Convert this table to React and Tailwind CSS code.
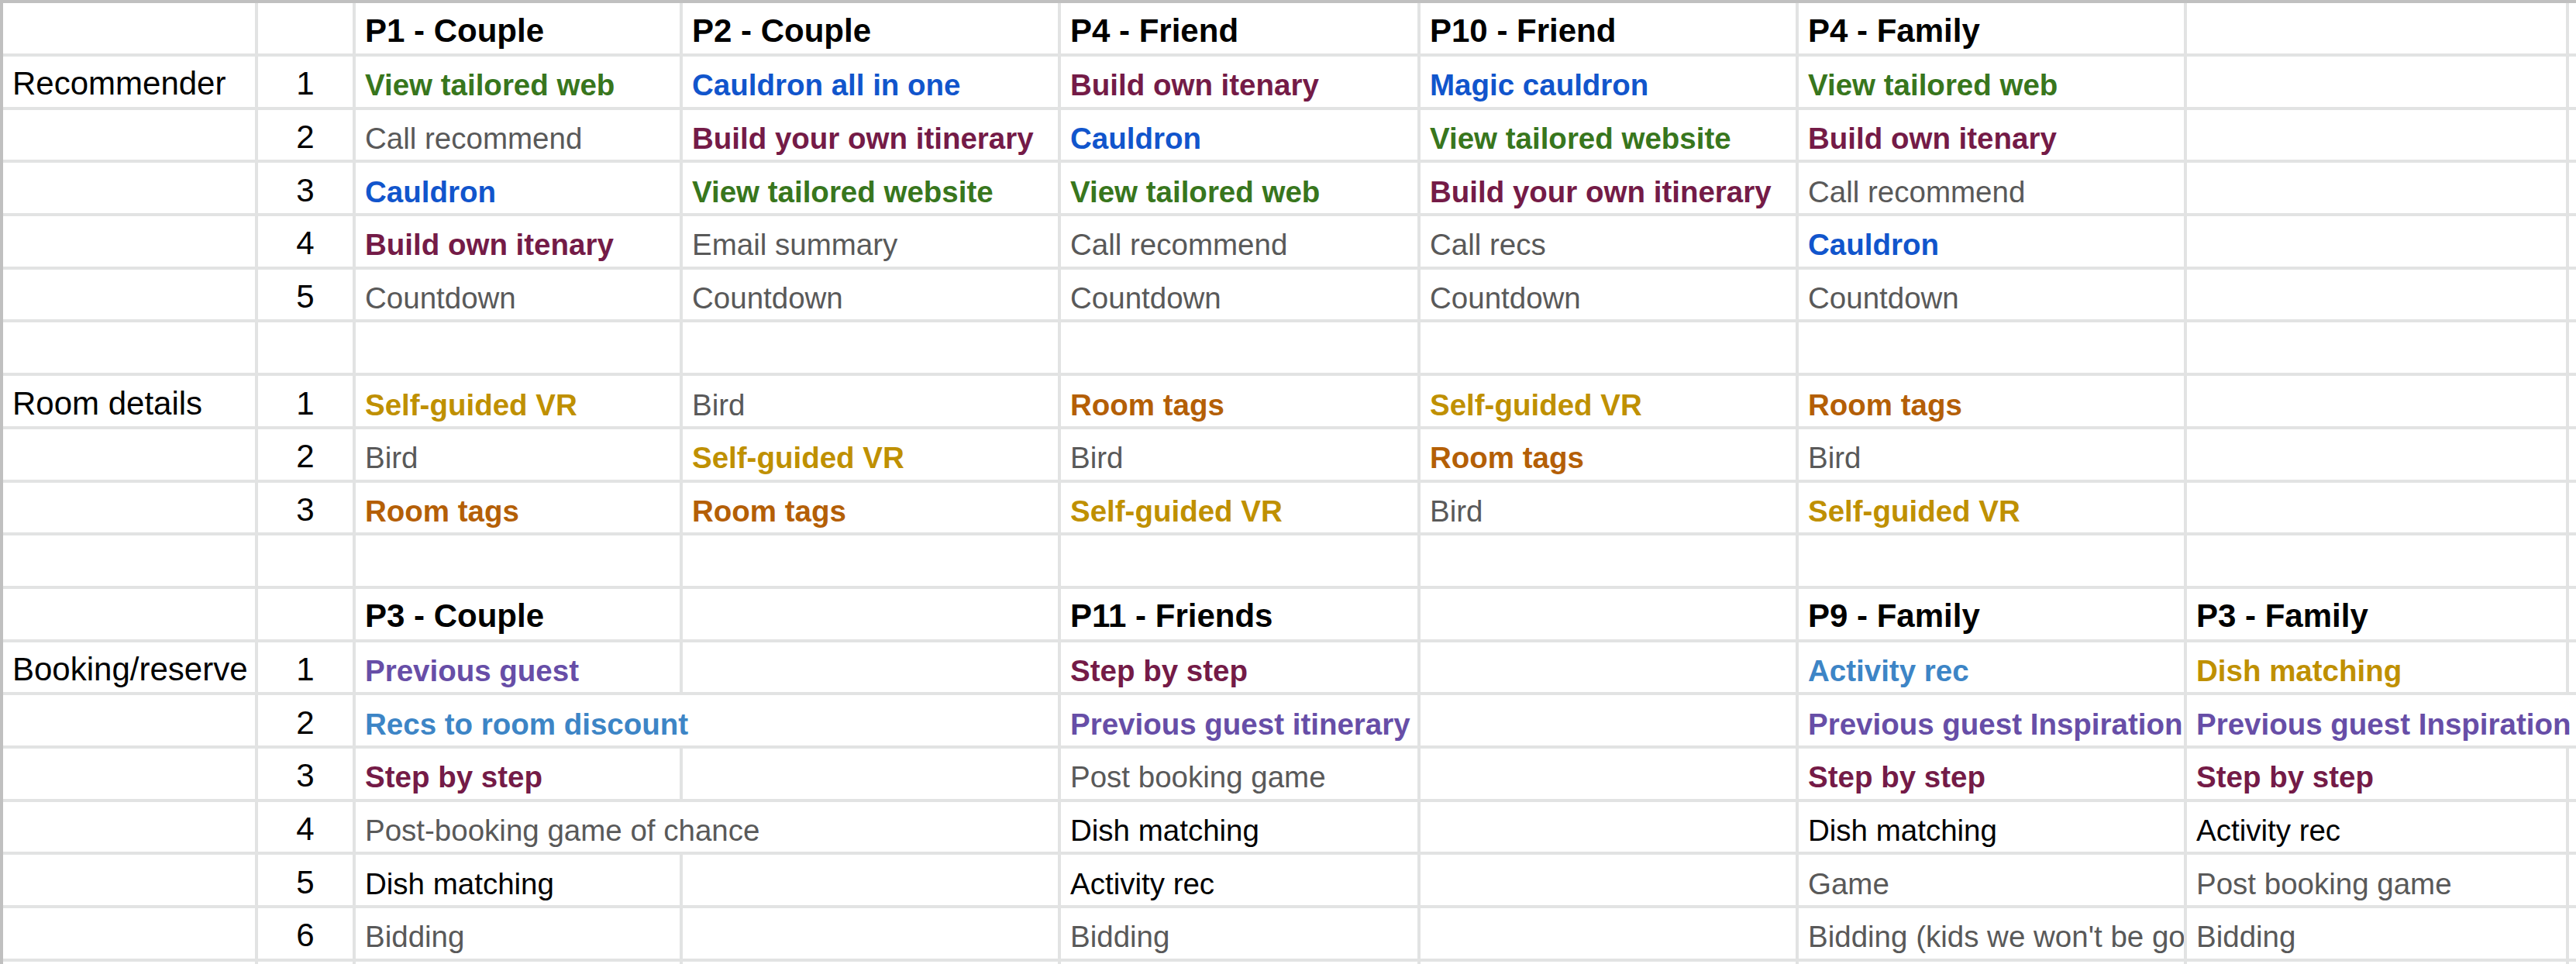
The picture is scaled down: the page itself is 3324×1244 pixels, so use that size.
import React from 'react';

// styles per text kind
const KIND = {
  g: 'text-[#38761d] font-bold text-[38.5px]',
  b: 'text-[#1155cc] font-bold text-[38.5px]',
  m: 'text-[#741b47] font-bold text-[38.5px]',
  y: 'text-[#bf9000] font-bold text-[38.5px]',
  o: 'text-[#b45f06] font-bold text-[38.5px]',
  p: 'text-[#674ea7] font-bold text-[38.5px]',
  l: 'text-[#3d85c6] font-bold text-[38.5px]',
  s: 'text-[#595959] text-[38.5px]',
  k: 'text-black text-[38.5px]',
  h: 'text-black font-bold text-[42px]',
  a: 'text-black text-[42px]',
};

const c = (t, k, span) => ({ t, k, span });

const rows = [
  [null, null, c('P1 - Couple', 'h'), c('P2 - Couple', 'h'), c('P4 - Friend', 'h'), c('P10 - Friend', 'h'), c('P4 - Family', 'h'), null, null],
  [c('Recommender', 'a'), '1', c('View tailored web', 'g'), c('Cauldron all in one', 'b'), c('Build own itenary', 'm'), c('Magic cauldron', 'b'), c('View tailored web', 'g'), null, null],
  [null, '2', c('Call recommend', 's'), c('Build your own itinerary', 'm'), c('Cauldron', 'b'), c('View tailored website', 'g'), c('Build own itenary', 'm'), null, null],
  [null, '3', c('Cauldron', 'b'), c('View tailored website', 'g'), c('View tailored web', 'g'), c('Build your own itinerary', 'm'), c('Call recommend', 's'), null, null],
  [null, '4', c('Build own itenary', 'm'), c('Email summary', 's'), c('Call recommend', 's'), c('Call recs', 's'), c('Cauldron', 'b'), null, null],
  [null, '5', c('Countdown', 's'), c('Countdown', 's'), c('Countdown', 's'), c('Countdown', 's'), c('Countdown', 's'), null, null],
  [null, null, null, null, null, null, null, null, null],
  [c('Room details', 'a'), '1', c('Self-guided VR', 'y'), c('Bird', 's'), c('Room tags', 'o'), c('Self-guided VR', 'y'), c('Room tags', 'o'), null, null],
  [null, '2', c('Bird', 's'), c('Self-guided VR', 'y'), c('Bird', 's'), c('Room tags', 'o'), c('Bird', 's'), null, null],
  [null, '3', c('Room tags', 'o'), c('Room tags', 'o'), c('Self-guided VR', 'y'), c('Bird', 's'), c('Self-guided VR', 'y'), null, null],
  [null, null, null, null, null, null, null, null, null],
  [null, null, c('P3 - Couple', 'h'), null, c('P11 - Friends', 'h'), null, c('P9 - Family', 'h'), c('P3 - Family', 'h'), null],
  [c('Booking/reserve', 'a'), '1', c('Previous guest', 'p'), null, c('Step by step', 'm'), null, c('Activity rec', 'l'), c('Dish matching', 'y'), null],
  [null, '2', c('Recs to room discount', 'l', true), c('Previous guest itinerary', 'p'), null, c('Previous guest Inspiration', 'p'), c('Previous guest Inspiration', 'p', true)],
  [null, '3', c('Step by step', 'm'), null, c('Post booking game', 's'), null, c('Step by step', 'm'), c('Step by step', 'm'), null],
  [null, '4', c('Post-booking game of chance', 's', true), c('Dish matching', 'k'), null, c('Dish matching', 'k'), c('Activity rec', 'k'), null],
  [null, '5', c('Dish matching', 'k'), null, c('Activity rec', 'k'), null, c('Game', 's'), c('Post booking game', 's'), null],
  [null, '6', c('Bidding', 's'), null, c('Bidding', 's'), null, c("Bidding (kids we won't be go", 's'), c('Bidding', 's'), null],
  [null, null, null, null, null, null, null, null, null],
];

const Cell = ({ cell }) => {
  if (typeof cell === 'string') {
    return (
      <div className="bg-white flex items-end justify-center pb-[5px] leading-[1.15] text-[42px] text-black">
        {cell}
      </div>
    );
  }
  if (!cell) return <div className="bg-white" />;
  return (
    <div
      className={`bg-white flex items-end overflow-hidden whitespace-nowrap pl-[12px] pb-[5px] leading-[1.15] ${
        cell.span ? 'col-span-2' : ''
      } ${KIND[cell.k]}`}
    >
      {cell.t}
    </div>
  );
};

export default function App() {
  return (
    <div className="w-[3324px] h-[1244px] overflow-hidden bg-white font-['Liberation_Sans',Arial,sans-serif]">
      <div className="border-t-4 border-l-4 border-[#c0c0c0] bg-[#e2e3e3] grid gap-[4px] grid-cols-[325px_122px_418px_484px_460px_484px_497px_489px_200px] grid-rows-[65px_repeat(18,64.7px)]">
        {rows.map((row, i) =>
          row.map((cell, j) => <Cell key={`${i}-${j}`} cell={cell} />)
        )}
      </div>
    </div>
  );
}
